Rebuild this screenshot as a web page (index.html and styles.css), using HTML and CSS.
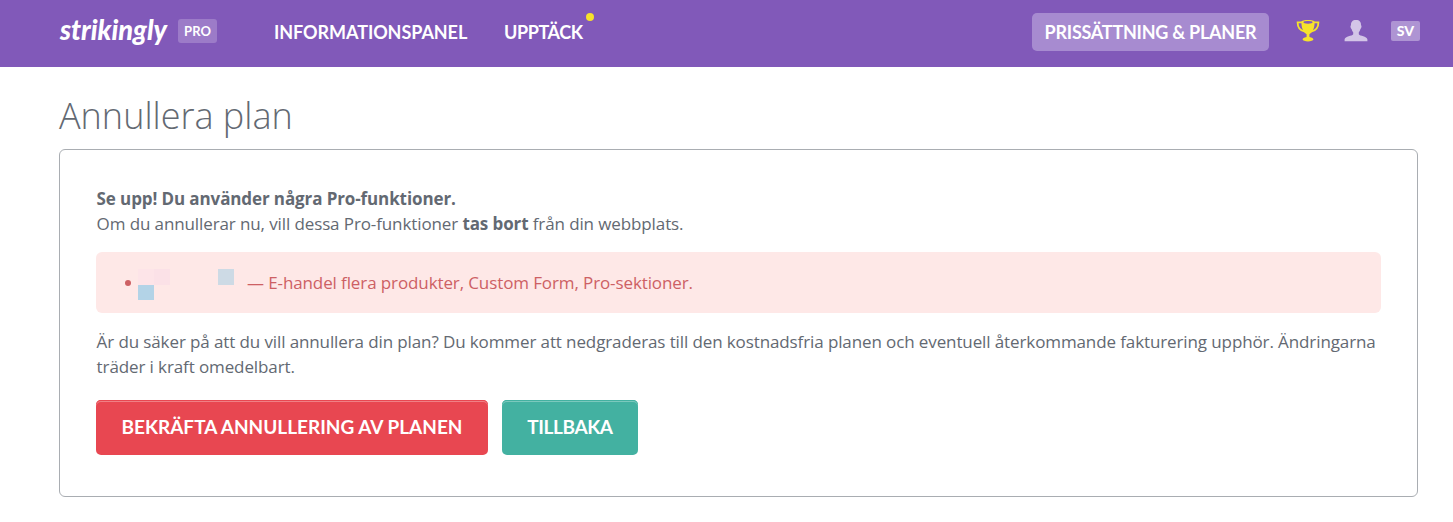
FILE: index.html
```
<!DOCTYPE html>
<html lang="sv">
<head>
	<meta charset="UTF-8">
	<title>Annullera plan</title>
	<link rel="stylesheet" href="styles.css">
</head>
<body>
	<div class="navbar">
		<a class="logo">
			<svg width="119" height="48" viewBox="0 0 119 48"><text x="1" y="33" textLength="107" lengthAdjust="spacingAndGlyphs">strikingly</text></svg>
		</a>
		<span class="badge">PRO</span>
		<div class="menu">
			<a class="panel">INFORMATIONSPANEL</a>
			<a class="discover">UPPTÄCK<i class="dot"></i></a>
		</div>
		<div class="tools">
			<a class="pricing">PRISSÄTTNING &amp; PLANER</a>
			<svg class="trophy" width="24" height="24" viewBox="0 0 24 24">
				<path class="line" d="M6 3.4H1.6C1.6 8.5 4.2 11.6 9 12.7M18 3.4h4.4C22.4 8.5 19.8 11.6 15 12.7"/>
				<path d="M5.4 2.8C5.4 .3 18.6 .3 18.6 2.8C18.6 9 17 13 13.4 15.2V18C16 18.4 17.4 19.2 17.4 20.6C17.4 23 6.6 23 6.6 20.6C6.6 19.2 8 18.4 10.6 18V15.2C7 13 5.4 9 5.4 2.8Z"/>
				<ellipse class="hole" cx="12" cy="3.3" rx="4.6" ry="1.4"/>
			</svg>
			<svg class="user" width="24" height="22" viewBox="0 0 24 22">
				<path d="M12 0C15.6 0 17.2 2 17 5.3C18 5.6 17.4 8.6 16.4 9C16 10.8 15.4 11.5 14.8 12.2V14.3C16 16.2 22.8 16.3 23.4 19.2V21.3H.6V19.2C1.2 16.3 8 16.2 9.2 14.3V12.2C8.6 11.5 8 10.8 7.6 9C6.6 8.6 6 5.6 7 5.3C6.8 2 8.4 0 12 0Z"/>
			</svg>
			<span class="lang">SV</span>
		</div>
	</div>
	<div class="content">
		<h1>Annullera plan</h1>
		<div class="box">
			<p class="warn"><b>Se upp! Du använder några Pro-funktioner.</b><br><span class="info">Om du annullerar nu, vill dessa Pro-funktioner <b>tas bort</b> från din webbplats.</span></p>
			<div class="alert">
				<i class="bullet"></i>
				<div class="mosaic">
					<i class="c1"></i>
					<i class="c2"></i>
					<i class="c3"></i>
					<i class="c4"></i>
				</div>
				<span class="features">— E-handel flera produkter, Custom Form, Pro-sektioner.</span>
			</div>
			<p class="sure">Är du säker på att du vill annullera din plan? Du kommer att nedgraderas till den kostnadsfria planen och eventuell återkommande fakturering upphör. Ändringarna träder i kraft omedelbart.</p>
			<div class="buttons">
				<a class="btn red">BEKRÄFTA ANNULLERING AV PLANEN</a>
				<a class="btn green">TILLBAKA</a>
			</div>
		</div>
	</div>
</body>
</html>
```
FILE: styles.css
```
*{
	padding: 0;
	margin: 0;
	box-sizing: border-box;
}
body{
	background-color: #fff;
	color: #636972;
	font-family: "Open Sans", sans-serif;
	font-size: 17px;
	line-height: 25px;
}
.navbar{
	height: 67px;
	padding: 0 33px 5px 59px;
	background-color: #8159b9;
	color: #fff;
	font-family: Lato, sans-serif;
	font-weight: bold;
	font-size: 18px;
	white-space: nowrap;
	display: flex;
	align-items: center;
}
.logo{
	width: 119px;
	height: 48px;
}
.logo svg{
	display: block;
	overflow: visible;
}
.logo text{
	fill: #fff;
	font-family: Lato, sans-serif;
	font-size: 29px;
	font-style: italic;
	font-weight: 900;
}
.badge{
	width: 39px;
	height: 24px;
	border-radius: 3px;
	background-color: #9c7bc8;
	font-size: 13px;
	line-height: 25px;
	text-align: center;
}
.menu{
	margin-left: 57px;
	padding-top: 2px;
	display: flex;
	gap: 37px;
}
.panel{
	width: 193px;
	letter-spacing: -0.07px;
}
.discover{
	letter-spacing: -0.4px;
	position: relative;
}
.dot{
	width: 8px;
	height: 8px;
	border-radius: 50%;
	background-color: #f6e22b;
	position: absolute;
	top: -7px;
	left: 82px;
}
.tools{
	margin-left: auto;
	display: flex;
	align-items: center;
}
.pricing{
	width: 237px;
	height: 38px;
	margin-top: 2px;
	border-radius: 5px;
	background-color: #a78bd0;
	line-height: 38px;
	letter-spacing: -0.25px;
	text-align: center;
}
.trophy{
	margin-left: 27px;
	fill: #f6e22b;
}
.trophy .line{
	fill: none;
	stroke: #f6e22b;
	stroke-width: 1.8;
}
.trophy .hole{
	fill: #8159b9;
}
.user{
	margin-left: 24px;
	fill: #d3c5e7;
}
.lang{
	width: 29px;
	height: 20px;
	margin-left: 23px;
	border-radius: 2px;
	background-color: #ae94d3;
	font-size: 14px;
	font-weight: 900;
	line-height: 20px;
	text-align: center;
}
.content{
	padding: 23px 35px 0 59px;
}
h1{
	height: 59px;
	font-size: 36px;
	font-weight: 300;
	line-height: 52px;
}
.box{
	height: 348px;
	padding: 36px;
	border: 1px solid #a9adb2;
	border-radius: 6px;
	letter-spacing: -0.11px;
}
.warn,
.sure{
	padding-left: 0.6px;
}
.alert{
	height: 61px;
	margin: 16px 0;
	padding: 0 29px;
	border-radius: 6px;
	background-color: #fee8e7;
	color: #cd6064;
	display: flex;
	align-items: center;
}
.bullet{
	width: 6px;
	height: 6px;
	border-radius: 50%;
	background-color: #cd6064;
}
.mosaic{
	width: 96px;
	margin: 3px 13px 0 7px;
	display: grid;
	grid-template-columns: repeat(6, 16px);
	grid-template-rows: 16px 15px;
}
.c1{
	background-color: #fde4e8;
}
.c2{
	background-color: #fbe1e7;
}
.c3{
	grid-column: 6;
	background-color: #cddae5;
}
.c4{
	grid-row: 2;
	background-color: #b3d3e7;
}
.buttons{
	margin-top: 21px;
	display: flex;
	gap: 14px;
}
.btn{
	height: 55px;
	border-radius: 5px;
	color: #fff;
	font-family: Lato, sans-serif;
	font-size: 19px;
	font-weight: bold;
	line-height: 54px;
	letter-spacing: 0;
	text-align: center;
	white-space: nowrap;
}
.red{
	width: 392px;
	background-color: #e84751;
	box-shadow: inset 0 1px #e84751, inset 0 2px #f08085;
}
.green{
	width: 136px;
	background-color: #43b1a1;
	box-shadow: inset 0 1px #43b1a1, inset 0 2px #7bc9bd;
	letter-spacing: -0.4px;
}
```
